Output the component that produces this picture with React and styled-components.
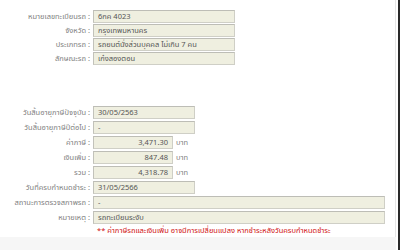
import React from 'react';
import styled, { createGlobalStyle } from 'styled-components';

const GlobalStyle = createGlobalStyle`
  html, body {
    margin: 0;
    padding: 0;
    background: #ffffff;
  }
  body {
    font-family: Tahoma, "Noto Sans Thai", "Noto Sans", "DejaVu Sans", sans-serif;
  }
`;

const Page = styled.div`
  width: 400px;
  height: 250px;
  box-sizing: border-box;
  border-right: 2px solid #2a2a2a;
  display: flex;
  flex-direction: column;
  overflow: hidden;
`;

const Panel = styled.div`
  flex: 1;
  border-right: 1px solid #e6e6e6;
  margin-right: 2px;
  padding-top: 10px;
  display: flex;
  flex-direction: column;
`;

const Section = styled.div`
  display: flex;
  flex-direction: column;
  gap: ${(p) => p.gap || 1}px;
  margin-bottom: ${(p) => p.after || 0}px;
`;

const Row = styled.div`
  display: flex;
  align-items: center;
  height: 13px;
`;

const Label = styled.div`
  width: 93px;
  flex: none;
  box-sizing: border-box;
  padding-right: 3px;
  text-align: right;
  font-size: 7.5px;
  color: #808080;
  white-space: nowrap;
`;

const Field = styled.div`
  width: ${(p) => p.w}px;
  height: 13px;
  box-sizing: border-box;
  background: #efefe0;
  border: 1px solid #cfcfc6;
  border-top-color: #bdbdb6;
  border-left-color: #c2c2ba;
  font-size: 7.5px;
  color: #555;
  line-height: 11px;
  padding: 0 4px;
  text-align: ${(p) => (p.num ? 'right' : 'left')};
  white-space: nowrap;
  overflow: hidden;
`;

const Unit = styled.span`
  font-size: 7.5px;
  color: #808080;
  margin-left: 3px;
`;

const Note = styled.div`
  margin-top: 1px;
  padding-left: 97px;
  font-size: 7.5px;
  color: #d01010;
  white-space: nowrap;
`;

const Footer = styled.div`
  height: 13px;
  background: #f6f6f6;
  margin-right: 2px;
`;

const vehicle = [
  ['หมายเลขทะเบียนรถ', '6กค 4023'],
  ['จังหวัด', 'กรุงเทพมหานคร'],
  ['ประเภทรถ', 'รถยนต์นั่งส่วนบุคคล ไม่เกิน 7 คน'],
  ['ลักษณะรถ', 'เก๋งสองตอน'],
];

const money = [
  ['ค่าภาษี', '3,471.30'],
  ['เงินเพิ่ม', '847.48'],
  ['รวม', '4,318.78'],
];

export default function App() {
  return (
    <>
      <GlobalStyle />
      <Page>
        <Panel>
          <Section gap={1} after={41}>
            {vehicle.map(([k, v]) => (
              <Row key={k}>
                <Label>{k} :</Label>
                <Field w={142}>{v}</Field>
              </Row>
            ))}
          </Section>
          <Section gap={2}>
            <Row>
              <Label>วันสิ้นอายุภาษีปัจจุบัน :</Label>
              <Field w={102}>30/05/2563</Field>
            </Row>
            <Row>
              <Label>วันสิ้นอายุภาษีปีต่อไป :</Label>
              <Field w={102}>-</Field>
            </Row>
            {money.map(([k, v]) => (
              <Row key={k}>
                <Label>{k} :</Label>
                <Field w={80} num>{v}</Field>
                <Unit>บาท</Unit>
              </Row>
            ))}
            <Row>
              <Label>วันที่ครบกำหนดชำระ :</Label>
              <Field w={102}>31/05/2566</Field>
            </Row>
            <Row>
              <Label>สถานะการตรวจสภาพรถ :</Label>
              <Field w={292}>-</Field>
            </Row>
            <Row>
              <Label>หมายเหตุ :</Label>
              <Field w={292}>รถทะเบียนระงับ</Field>
            </Row>
          </Section>
          <Note>** ค่าภาษีรถและเงินเพิ่ม อาจมีการเปลี่ยนแปลง หากชำระหลังวันครบกำหนดชำระ</Note>
        </Panel>
        <Footer />
      </Page>
    </>
  );
}
